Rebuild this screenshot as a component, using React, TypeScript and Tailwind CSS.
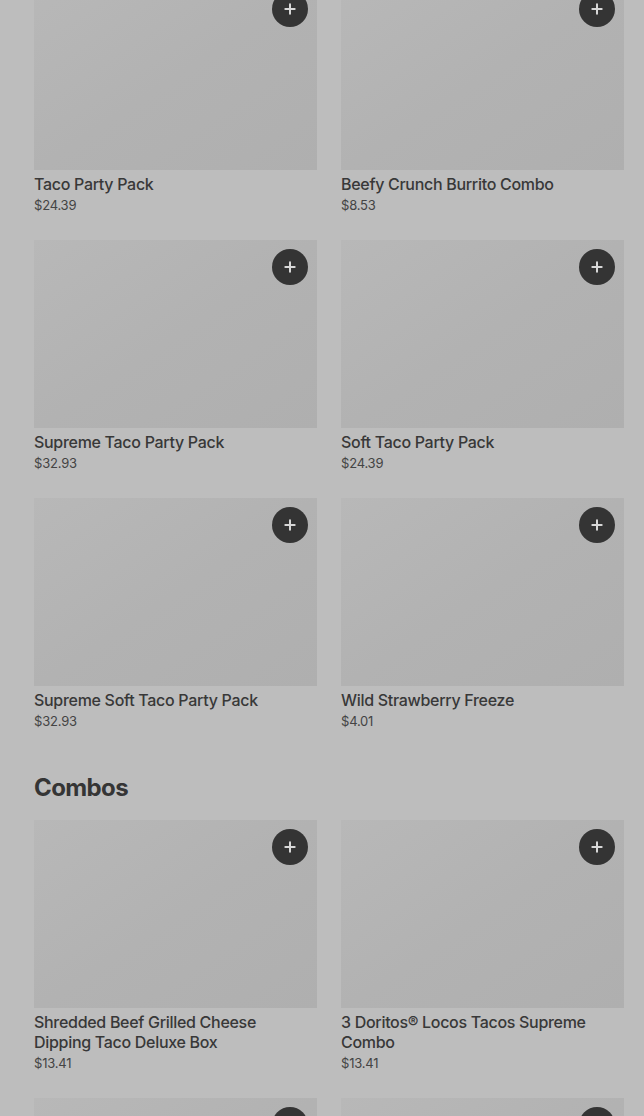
import { Plus } from "lucide-react";

interface Item {
  name: string;
  price: string;
}

const PARTY: Item[] = [
  { name: "Taco Party Pack", price: "$24.39" },
  { name: "Beefy Crunch Burrito Combo", price: "$8.53" },
  { name: "Supreme Taco Party Pack", price: "$32.93" },
  { name: "Soft Taco Party Pack", price: "$24.39" },
  { name: "Supreme Soft Taco Party Pack", price: "$32.93" },
  { name: "Wild Strawberry Freeze", price: "$4.01" },
];

const COMBOS: Item[] = [
  { name: "Shredded Beef Grilled Cheese Dipping Taco Deluxe Box", price: "$13.41" },
  { name: "3 Doritos® Locos Tacos Supreme Combo", price: "$13.41" },
];

function Photo() {
  return (
    <div className="relative h-[188px] bg-gradient-to-br from-[#b8b8b8] via-[#b2b2b2] to-[#afafaf]">
      <button className="absolute top-[9px] right-[9px] w-9 h-9 rounded-full bg-[#343434] text-[#d8d8d8] flex items-center justify-center">
        <Plus size={16} strokeWidth={3} />
      </button>
    </div>
  );
}

function Card({ item }: { item: Item }) {
  return (
    <div className="flex flex-col">
      <Photo />
      <p className="mt-1 pr-4 text-[16px] leading-5 font-medium tracking-[-0.3px] text-[#383838]">
        {item.name}
      </p>
      <p className="mt-[3px] text-[13px] leading-[17px] tracking-[-0.2px] text-[#444]">
        {item.price}
      </p>
    </div>
  );
}

export default function App() {
  return (
    <div
      className="h-[1116px] overflow-hidden bg-[#bdbdbd] pl-[34px] pr-[20px]"
      style={{ fontFamily: "Inter, 'Noto Sans', sans-serif" }}
    >
      <div className="-mt-[18px]">
        <div className="grid grid-cols-2 gap-x-6 gap-y-[26px]">
          {PARTY.map((item) => (
            <Card key={item.name} item={item} />
          ))}
        </div>

        <h2 className="mt-[42px] mb-4 text-[24px] leading-8 font-bold tracking-[-0.6px] text-[#353535]">
          Combos
        </h2>
        <div className="grid grid-cols-2 gap-x-6 gap-y-[26px]">
          {COMBOS.map((item) => (
            <Card key={item.name} item={item} />
          ))}
          <Photo />
          <Photo />
        </div>
      </div>
    </div>
  );
}
